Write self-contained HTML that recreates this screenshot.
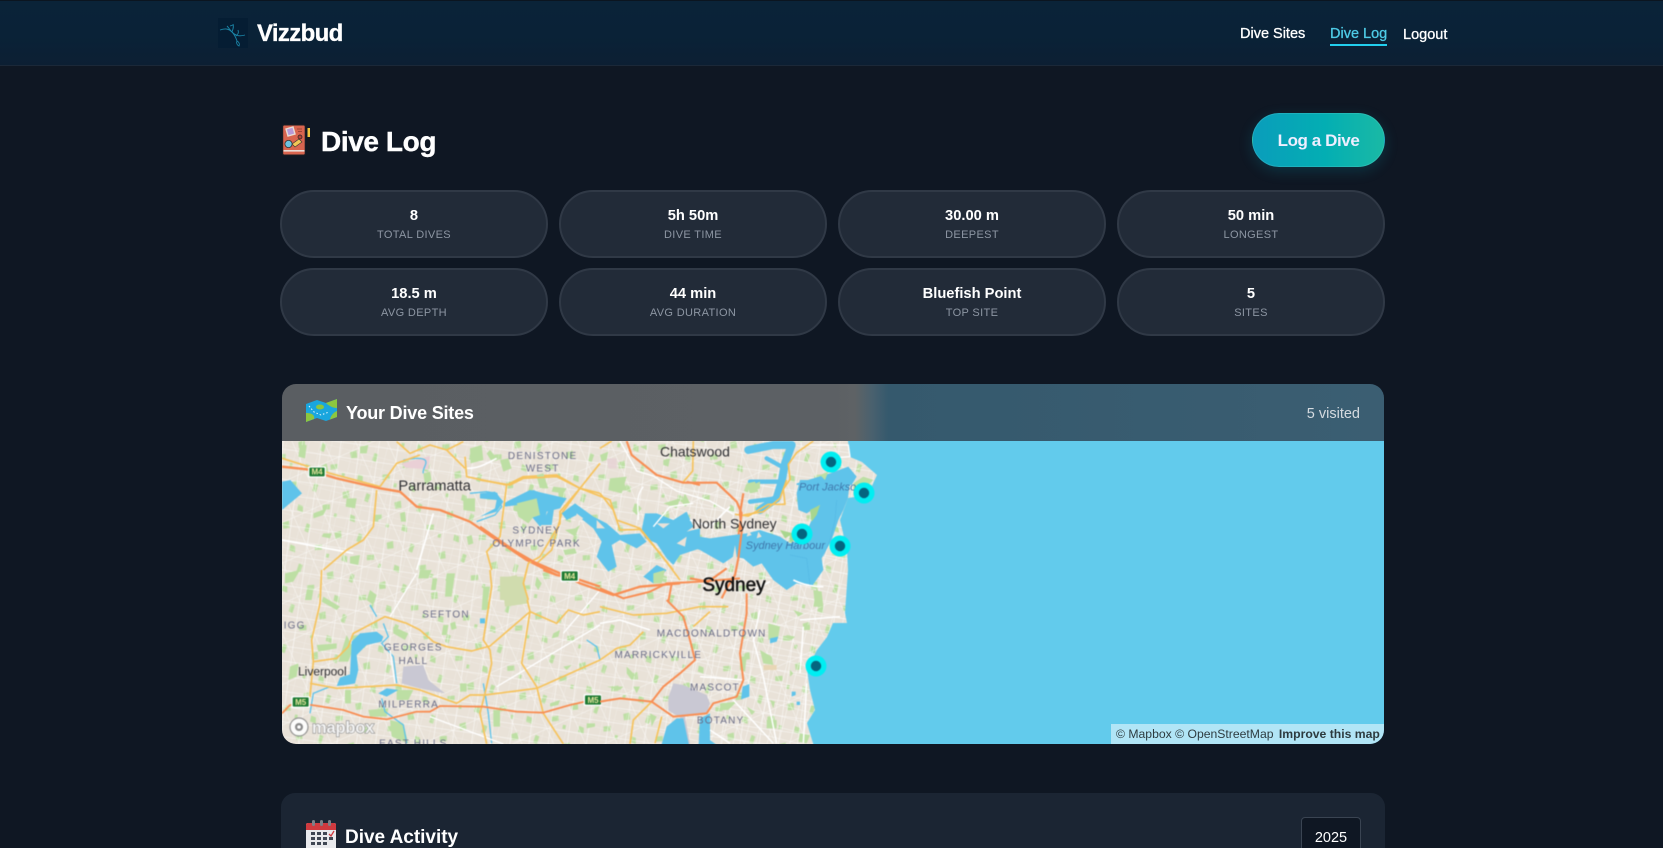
<!DOCTYPE html>
<html lang="en"><head><meta charset="utf-8"><title>Vizzbud - Dive Log</title>
<style>
*{box-sizing:border-box;margin:0;padding:0}
html,body{width:1663px;height:848px;overflow:hidden;background:#0f1723;font-family:"Liberation Sans",Arial,sans-serif;color:#fff}
#w{position:relative;width:1663px;height:848px;overflow:hidden;background:#0f1723}
.abs{position:absolute}
nav{position:absolute;left:0;top:0;width:1663px;height:66px;background:linear-gradient(180deg,#0a2338 0%,#0a2237 55%,#0c1f33 100%);border-top:1px solid #0b1520;border-bottom:1px solid #1b2838}
.brand{position:absolute;left:257px;top:19px;font-size:24px;font-weight:700;letter-spacing:-.66px;line-height:30px;-webkit-text-stroke:.3px #fff}
.nl{position:absolute;font-size:14.5px;line-height:18px;color:#fff;-webkit-text-stroke:.3px currentColor;white-space:nowrap}
h1{position:absolute;left:321px;top:125px;font-size:28px;line-height:34px;font-weight:700;letter-spacing:-.4px;-webkit-text-stroke:.4px #fff}
.btn{position:absolute;left:1252px;top:113px;width:133px;height:54px;border-radius:27px;background:linear-gradient(90deg,#0a9dbb,#03aeb3 55%,#1ab9a5);box-shadow:0 4px 14px rgba(6,182,212,.18);border:1px solid rgba(130,220,220,.2);font-size:17px;font-weight:700;letter-spacing:-.42px;text-align:center;line-height:53px;color:#eef}
.stat{position:absolute;width:268px;height:68px;border-radius:34px;background:#222b38;border:2px solid #303946;text-align:center}
.stat b{position:absolute;left:0;right:0;top:15px;font-size:14.7px;line-height:18px;font-weight:700;white-space:nowrap}
.stat span{position:absolute;left:0;right:0;top:36px;font-size:11px;line-height:14px;letter-spacing:.35px;color:#8d96a3;white-space:nowrap}
.card{position:absolute;left:282px;top:384px;width:1102px;height:360px;border-radius:14px;overflow:hidden}
.hd{position:absolute;z-index:2;left:0;top:0;width:1102px;height:57px;background:linear-gradient(90deg,#5a5e62 0,#5c6064 50%,#5e6265 52%,#4a616e 53.5%,#35596d 55%,#3b5e72 100%)}
.ttl{position:absolute;z-index:3;left:64px;top:18px;font-size:18px;line-height:22px;font-weight:700;letter-spacing:-.2px;white-space:nowrap}
.vis{position:absolute;z-index:3;right:24px;top:20px;font-size:14.5px;line-height:20px;color:#d5dbe0}
.map{position:absolute;left:-4px;top:53px;width:1110px;height:311px;display:block;filter:blur(.45px)}
.attr{position:absolute;z-index:3;right:0;bottom:0;width:273px;height:20px;background:rgba(255,255,255,.5);font-size:12.2px;line-height:21px;padding-left:5px;color:rgba(0,0,0,.75);white-space:nowrap}
.attr b{margin-left:2px}
.card2{position:absolute;left:281px;top:793px;width:1104px;height:55px;border-radius:14px 14px 0 0;background:#1b2533}
.t2{position:absolute;left:345px;top:826px;font-size:19px;line-height:23px;font-weight:700;letter-spacing:-.02px}
.sel{position:absolute;left:1301px;top:817px;width:60px;height:31px;border:1px solid #3a4452;border-bottom:0;border-radius:4px 4px 0 0;background:#0f1723;font-size:14.5px;text-align:center;line-height:40px}
</style></head><body><div id="w">
<nav></nav>
<svg class="abs" style="left:218px;top:18px" width="30" height="30" viewBox="0 0 30 30"><rect width="30" height="30" fill="#051d33"/><g fill="none" stroke="#1b86a8" stroke-width=".9"><path d="M2 12C8 10 11 11 14 14S20 19 27 17"/><path d="M9 8c2 2 3 4 5 6 3 3 4 6 5 9"/><path d="M19 23c-1 2 0 4 2 5 1-2 0-4-2-5M14 14c1-3 2-5 1-8M18 18c2-2 3-3 2-6M12 8l3-1"/></g></svg>
<div class="brand">Vizzbud</div>
<a class="nl" style="left:1240px;top:25px">Dive Sites</a>
<a class="nl" style="left:1330px;top:25px;color:#4ecbe6">Dive Log</a>
<div class="abs" style="left:1330px;top:44px;width:57px;height:2px;background:#22cfee"></div>
<a class="nl" style="left:1403px;top:26px">Logout</a>

<svg class="abs" style="left:282px;top:124px" width="30" height="32" viewBox="0 0 30 32">
<rect x=".7" y="1" width="22.5" height="30" rx="1.5" fill="#d9654f" stroke="#1d1d22" stroke-width="1"/>
<rect x="1.5" y="26" width="21" height="1.6" fill="#e9dcd5"/>
<path d="M4 5l7-2 2 7-7 2z" fill="#b89ad8" stroke="#e9dcd5" stroke-width="1.4"/>
<circle cx="6.5" cy="20" r="3.6" fill="#6cc3e0" stroke="#333" stroke-width=".8"/>
<path d="M10 20l7-5 3 3-7 5z" fill="#f2c555" stroke="#333" stroke-width=".6"/>
<circle cx="18" cy="13" r="2" fill="#b6453a" stroke="#222" stroke-width=".7"/>
<path d="M15 5h5M16 7.5h4" stroke="#8a3b30" stroke-width=".8"/>
<rect x="25.5" y="4" width="2.5" height="9" fill="#f3c63f"/><rect x="25.5" y="13" width="2.5" height="15" fill="#14171d"/>
</svg>
<h1>Dive Log</h1>
<div class="btn">Log a Dive</div>

<div class="stat" style="left:280px;top:190px"><b>8</b><span>TOTAL DIVES</span></div>
<div class="stat" style="left:559px;top:190px"><b>5h 50m</b><span>DIVE TIME</span></div>
<div class="stat" style="left:838px;top:190px"><b>30.00 m</b><span>DEEPEST</span></div>
<div class="stat" style="left:1117px;top:190px"><b>50 min</b><span>LONGEST</span></div>
<div class="stat" style="left:280px;top:268px"><b>18.5 m</b><span>AVG DEPTH</span></div>
<div class="stat" style="left:559px;top:268px"><b>44 min</b><span>AVG DURATION</span></div>
<div class="stat" style="left:838px;top:268px"><b>Bluefish Point</b><span>TOP SITE</span></div>
<div class="stat" style="left:1117px;top:268px"><b>5</b><span>SITES</span></div>

<div class="card">
<div class="hd"></div>
<svg class="abs" style="left:23px;top:14px;z-index:3" width="33" height="26" viewBox="0 0 33 26">
<path d="M1 6L12 2 21 5 32 1V19L21 23 12 20 1 24Z" fill="#1aa6de"/>
<path d="M1 15V24L9 21C10 18 8 15 1 15ZM21 5L32 1V10C28 10 24 8 21 5ZM25 21.500l7-2.500V13c-3 1-6 4-7 8.500z" fill="#8dc63f"/>
<ellipse cx="15" cy="9" rx="4" ry="2.500" fill="#8dc63f"/>
<path d="M4 8l5 6 7 3 8-3" fill="none" stroke="#e6f6ff" stroke-width="1" stroke-dasharray="1.500 2"/>
</svg>
<div class="ttl">Your Dive Sites</div>
<div class="vis">5 visited</div>
<svg class="map" viewBox="278 437 1110 311" xmlns="http://www.w3.org/2000/svg">
<defs>
<pattern id="s1" width="19" height="15" patternUnits="userSpaceOnUse" patternTransform="rotate(8)"><path d="M0 0H19M0 0V15" stroke="#fff" stroke-width="1.1" fill="none"/></pattern>
<pattern id="s2" width="29" height="37" patternUnits="userSpaceOnUse" patternTransform="rotate(-24)"><path d="M0 0H29M0 0V37" stroke="#fff" stroke-width="1" fill="none"/></pattern>
<pattern id="s3" width="11" height="11" patternUnits="userSpaceOnUse" patternTransform="rotate(14)"><path d="M0 0H11M0 0V11" stroke="#fff" stroke-width="1" fill="none"/></pattern>
<pattern id="g1" width="53" height="41" patternUnits="userSpaceOnUse" patternTransform="rotate(11)"><path d="M6 8l6-3 2 7-6 2zM30 4l4 1-1 8-4-1zM42 24l7-2 1 5-7 2zM18 28l5 1 1 6-6-1zM2 30l3 0 0 4-3 0z" fill="#bddfa4"/></pattern>
</defs>
<rect x="270" y="430" width="1130" height="330" fill="#e9e2d8"/>
<rect x="270" y="430" width="620" height="330" fill="url(#g1)"/>
<rect x="270" y="430" width="620" height="330" fill="url(#s1)" opacity=".85"/>
<rect x="270" y="430" width="620" height="330" fill="url(#s2)" opacity=".7"/>
<rect x="270" y="430" width="620" height="330" fill="url(#s3)" opacity=".3"/>
<rect x="660" y="480" width="190" height="280" fill="url(#s3)" opacity=".55"/>

<!-- ocean -->
<path d="M848 441L850 457 862 462 877 475 870 490 855 497 848 498 840 520 847 550 848 570 845 613 847 623 833 623 827 637 817 650 807 670 810 690 815 710 807 723 815 750H1400V430H848Z" fill="#62cbec"/>

<!-- Q1 parramatta -->
<g transform="translate(270 370) scale(.33333)">
<g fill="#bddfa4">
<path d="M600 235l35-10 5 45-38 10zM230 385h30l-5 30-28-5zM580 385h35v40l-35-5zM735 400l55-20 25 30-40 50-30-20zM90 225h20l-5 40-20-5zM150 290l20-10 5 25-20 5zM460 310l20-5 5 25-20 15zM130 430l40-15-10 20-30 10zM310 440h15v15h-15zM390 430l15-5 3 30-15 0zM160 490h25l-5 15-25-5zM800 320l20 0 10 30-20 5zM850 350l40 5-10 15-35-5zM690 270l25-5 10 30-25 10zM590 500l15-5 5 25-15 5zM650 250l10-10 25 30-20 5zM270 230l25-5-5 25-20 0zM240 560l30-5-5 30-25-5z"/>
</g>
<path d="M395 280l40-10 45-12-5 40-70-5z" fill="#ead0d6"/>
<path d="M36 335l25-5 35 40-30 25-30 25z" fill="#5fc3ea"/>
<path d="M790 360l40 15 60 10-20 30-40 10-5 30-15 15-25-30-5-40-75 10-5-10z" fill="#5fc3ea"/>
<g fill="none" stroke="#5fc3ea" stroke-width="4"><path d="M400 270c30-5 55-8 65 0s-10 30-5 40M600 370l50-5 30 5 15 40-20 25-55 20"/></g>
<path d="M36 510L250 550M490 430L440 600M590 295c40 0 60-15 90-30" fill="none" stroke="#fff" stroke-width="5"/>
<g fill="none" stroke="#f6c35d" stroke-width="5" stroke-linejoin="round">
<path d="M36 265L180 310 330 350M320 360l-10 110-30 40-50 30-70 60M380 215l40 35 60-25 50 15 50-25M585 260l5 60 120 25 50-25 100-5 70 40 60 15M710 345L690 500 650 545 665 600M990 280L930 355 875 430 845 540 800 580M530 240L585 295M330 350L380 280 450 255"/>
</g>
<path d="M36 290L110 298 200 325 330 355 390 365 440 410 510 420 600 455 680 510 770 570 860 615" fill="none" stroke="#f88f55" stroke-width="7" stroke-linejoin="round"/>
<rect x="114" y="289" width="54" height="34" rx="5" fill="#fff"/><rect x="118" y="293" width="46" height="26" rx="3" fill="#1d7a32"/>
<text x="141" y="314" font-size="24" font-weight="700" fill="#e8e6a0" text-anchor="middle">M4</text>
<text x="494" y="362" font-size="44" fill="#2f2f33" text-anchor="middle">Parramatta</text>
<g font-size="30" fill="#6a6d88" text-anchor="middle" letter-spacing="3.8">
<text x="818" y="267">DENISTONE</text><text x="818" y="305">WEST</text>
</g>
</g>

<!-- Q3 southwest -->
<g transform="translate(270 570) scale(.33333)">
<g fill="#bddfa4">
<path d="M45 10l45-10-20 35-25 5zM530 10h25l-10 70h-20zM450 0h35l-10 25-30 0zM488 25h14l-5 35h-14zM110 60l20 0-5 30-20 0zM300 60l20 15-10 30-20-15zM160 80l50 30-10 10-45-25zM370 170l45 20-10 20-35-20zM640 50l20 0-10 70-15 0zM230 195l20 40-15 40-30 0zM140 225l60-5 0 15-55 10zM520 165l15 0-5 30-15 0zM225 360h18v40h-18zM380 360h50l-15 30-35 0zM570 340l20 0 0 25-20 0zM295 420l60-5-5 25-50 0zM360 450l40 10 15 60-50-20zM60 290l25-10-5 40-25 10zM670 420l20 0 0 50-20 0zM800 20l15 20-10 20-10-15zM850 190l20-10-5 20-20 5zM880 290l25-5-15 15zM950 460l25 0 0 10-25 5zM840 400l30-10-5 15-25 5zM540 160l15-5 5 20-15 5z"/>
</g>
<path d="M695 25l45-10 20 60 15 25-70 10z" fill="#d0dcae"/>
<path d="M400 290l60-5 15 45 50 40-75-15-55-15z" fill="#c9c8d3"/>
<path d="M245 215l25-25 50-5 20 15-5 15-45 10-30 30 5 45-10 40-25 5-30 3 10-25 30-10zM325 370l25-15 35 5-35 20z" fill="#5fc3ea"/>
<path d="M630 145h15v15h-15z" fill="#5fc3ea"/>
<g fill="none" stroke="#5fc3ea" stroke-width="4"><path d="M340 160l15 40-20 20 35 40 10 80M335 385l10 40 55 40 10 55M120 430l10-60 50-20M640 340l15 90 10 90M950 210l30 20 10 40M300 105l20 35"/></g>
<g fill="none" stroke="#fff" stroke-width="4"><path d="M360 140L440 10M680 350L990 165M990 60L880 190M360 240l15 100M480 440L700 522"/></g>
<g fill="none" stroke="#f6c35d" stroke-width="5" stroke-linejoin="round">
<path d="M155 0L150 100 125 210 130 275 120 380 110 400M130 275L200 265 235 230 250 190 345 140 410 160 450 180 490 215 530 230 605 243 660 228 780 125 860 160 895 120 940 135 990 125M660 0L665 50 640 210 660 240 665 280 645 370 630 430 650 522M770 0L760 40 780 125 755 280 800 350 820 430 880 522M120 340L200 355 380 345 450 360 560 400 600 375 645 375 800 355 990 270"/>
</g>
<path d="M36 430L60 405 125 405 220 420 280 440 350 448 440 425 480 425 510 408 640 410 740 425 820 428 900 405 945 395 990 380" fill="none" stroke="#f88f55" stroke-width="5.500" stroke-linejoin="round"/>
<path d="M820 0L860 15 930 30 990 50" fill="none" stroke="#f88f55" stroke-width="7"/>
<g>
<rect x="64" y="378" width="56" height="36" rx="5" fill="#fff"/><rect x="68" y="382" width="48" height="28" rx="3" fill="#1d7a32"/>
<text x="92" y="405" font-size="24" font-weight="700" fill="#e8e6a0" text-anchor="middle">M5</text>
<rect x="941" y="372" width="54" height="36" rx="5" fill="#fff"/><rect x="945" y="376" width="48" height="28" rx="3" fill="#1d7a32"/>
<text x="969" y="399" font-size="24" font-weight="700" fill="#e8e6a0" text-anchor="middle">M5</text>
</g>
<text x="157" y="316" font-size="36" fill="#2f2f33" text-anchor="middle">Liverpool</text>
<g font-size="30" fill="#6a6d88" text-anchor="middle" letter-spacing="3.6">
<text x="528" y="142">SEFTON</text><text x="430" y="242">GEORGES</text><text x="430" y="282">HALL</text>
<text x="74" y="175">IGG</text><text x="416" y="413">MILPERRA</text><text x="430" y="530">EAST HILLS</text>
</g>
</g>

<!-- Z12 parramatta river -->
<g transform="translate(480 470) scale(.33333)" fill="#5fc3ea">
<path d="M245 130l40-30 55 40 40 20 40 35 60-5 20 25-30 20-50-25-25 15 15 65-25 15-35-45 15-45-25-40-50-40-30 15zM495 130l35 0 50 20 40-25 20 45-20 15 40-10 0 60-60 20-20 30-20-20-30-45-35-15-10-25zM490 320l40-35 30 15-40 40zM80 95l70-35 110 25-50 25-25 55 30 0 10-70-25-15"/>
<path d="M0 70l45-5 25 30-20 30-50 15 45-25 5-25-50-5z"/>
</g>
<g transform="translate(480 470) scale(.33333)" fill="#e9e2d8"><path d="M290 130l20 15-25 15zM350 150l25 25-25 0zM530 160l40 0-20 15zM590 220l30-20-5 30z"/></g>
<g transform="translate(480 470) scale(.33333)" fill="#bddfa4"><path d="M110 100l60-15 10 50-45 15zM170 15l20-5 15 45-20 0zM255 180l30-5 15-10-15 35zM390 25l50-5-15 50-40-10zM520 310l35-10-10 40-25 0zM250 240l35-5 5 15-35 5zM470 100l15 15-15 20-10-10zM550 100l50-15-10 30z"/><path d="M60 320l70 0 15 70H60z" fill="#d0dcae"/></g>
<g transform="translate(480 470) scale(.33333)" fill="none" stroke="#f6c35d" stroke-width="5"><path d="M0 30L90 45 130 25 230 20 300 55 390 90 410 150 480 175 540 250 600 330M300 55L240 125 240 160 180 260 145 280 130 340 145 390"/></g>
<path transform="translate(480 470) scale(.33333)" d="M620 35l40 10" fill="none" stroke="#f88f55" stroke-width="6"/>

<!-- Q2 north -->
<g transform="translate(600 370) scale(.33333)">
<g fill="none" stroke="#5fc3ea" stroke-linejoin="round" stroke-linecap="round">
<path d="M445 240L520 225 575 225 555 280 545 335 530 385 480 420" stroke-width="24"/>
<path d="M545 290L500 265M540 335L450 335M530 385L450 395" stroke-width="13"/>
</g>
<path d="M590 340L640 325 690 310 730 295 745 290 770 320 755 345 590 345Z" fill="#5fc3ea"/>
<g fill="#bddfa4"><path d="M0 255l25-10-5 25-15 5zM120 230l20-5 0 15zM190 270l20-5-5 25-15-5zM455 345l25-10 0 20-25 10zM340 280l25-10 0 20zM30 340l40-10 10 30-40 5zM255 370l15 30-15 10-10-15zM660 315l25-10-10 25zM760 340l30-20 30 10-30 30-30 5zM720 350l20 5-10 25z"/></g>
<path d="M20 265h30v30H25z" fill="#e6d2d4" opacity=".8"/>
<g fill="none" stroke="#fff" stroke-width="4"><path d="M60 213l50 90 50 15 70 45 100 30 70 40M130 350c-25 30-15 60-15 100M620 225h125l5 35-70 5M160 470l50-60 70-10"/></g>
<g fill="none" stroke="#f6c35d" stroke-width="5" stroke-linejoin="round">
<path d="M0 235L35 213M0 370L40 420 60 480 120 478 220 600M280 213l-2 90-30 35M640 213l-50 35-25 35 5 45-20 30 5 45-50 0-60 35-40-5"/>
</g>
<path d="M80 213L95 255 170 315 250 338 350 338 410 395 425 430 415 500" fill="none" stroke="#f88f55" stroke-width="6.500" stroke-linejoin="round"/>
</g>

<!-- Z11 harbour -->
<g transform="translate(690 480) scale(.33333)">
<path d="M0 165L60 175 130 165 170 160 210 150 270 170 300 190 340 175 365 120 390 75 350 100 325 90 320 40 330 0H480L474 54 460 90 445 120 425 180 395 235 400 270 365 320 320 310 290 330 250 300 215 250 190 260 160 235 130 230 100 250 30 210 0 200Z" fill="#5fc3ea"/>
<path d="M135 195l8 55-8 30-8-40zM175 150l-5 20 15-5zM205 155l-5 20 15-5z" fill="#e9e2d8"/>
<path d="M390 75l-30 15 5 35 15-20zM270 150l40 10-25 15zM300 160l20-5 0 25-20 5z" fill="#a8d68e"/>
<path d="M445 165l-20 60 40 10 8-50z" fill="#bddfa4" opacity=".7"/>
<path d="M380 320l20 60h-30zM170 10l25-5 10 30-25 5z" fill="#bddfa4"/>
<path d="M160 40l-10 60 5 55-10 80-10 50-25 40-15 30M0 295l55 10 55-40" fill="none" stroke="#f88f55" stroke-width="6.500" stroke-linejoin="round"/>
<path d="M160 105l60-10 50-40 20-55" fill="none" stroke="#f6c35d" stroke-width="5"/>
<path d="M310 300c20 10 50 20 90 20M180 335l60-30M0 120l60 20 60-60" fill="none" stroke="#fff" stroke-width="5"/>
<path d="M440 60l-5 60-15 60-20 50M300 225l50 10 10 80" fill="none" stroke="#4aaede" stroke-width="1"/>
</g>

<!-- Q4 south -->
<g transform="translate(600 570) scale(.33333)">
<g fill="#bddfa4">
<path d="M640 60l25 5 5 45-25 0zM505 160l35 10-5 30-30 10zM480 240l35 20 5 25-30-5zM410 160l20-5 0 15zM580 120l30 10-15 10zM500 450l30 0 0 25-30 0zM600 490l30 5-10 25-25-5zM360 400l50-5-25 25-25 0zM420 260l20 0-5 45-15-5zM440 410l25 15-10 10zM610 165h20v15h-20zM560 195l25 5-10 10-15-5zM80 290l25 25-10 15-15-20zM20 350l50 0-10 10zM510 390l15 5-5 20zM570 300l10 10-10 10zM100 350l20 0-10 20zM150 430l20 10-15 30z"/>
</g>
<path d="M490 285h40v15h-40z" fill="#e8d6b5"/>
<path d="M220 340l30 5 70 30 10 25-10 30-65 10 15 82h-15l-15-80-35-20 0-40z" fill="#c9c8d3"/>
<path d="M180 540l20-70 30-25 20 0 20 95zM300 445l30-15 0 110-35 0zM330 510l40 30h-40zM428 350l20-8 0 38-25 8zM575 365l12 0 0 10-12 5zM590 395l10 0 0 10-10 0zM510 205l25-5-5 15-20 5z" fill="#5fc3ea"/>
<g fill="none" stroke="#fff" stroke-width="4.500"><path d="M0 160l60-10 90 30M490 320l40 200M400 390l120 130M330 480l60 40M600 150l120-10M480 120l-20 90 30 110M610 170l-10 140M620 340l-10 180M300 320l130 10"/></g>
<g fill="none" stroke="#f6c35d" stroke-width="5" stroke-linejoin="round">
<path d="M0 110l100 25 100-5 100-20 85 0M0 270L50 235 90 225 130 185M90 522l10-72 60-60M280 170l50-45M185 440l-20 80"/>
</g>
<path d="M0 55L70 85 150 65 200 40 300 35 420 25M200 90L250 140 270 210 285 270 240 310 190 350 155 395M440 70L440 130 420 250 430 330 410 380 340 400 320 430 220 440 155 395 60 385 0 395M215 40L205 95M240 310l40-35" fill="none" stroke="#f88f55" stroke-width="6" stroke-linejoin="round"/>
<g font-size="30" fill="#6a6d88" text-anchor="middle" letter-spacing="3.6">
<text x="335" y="200">MACDONALDTOWN</text><text x="175" y="264">MARRICKVILLE</text><text x="345" y="362">MASCOT</text><text x="362" y="461">BOTANY</text>
</g>
</g>
<!-- top labels -->
<g transform="translate(600 370) scale(.33333)" text-anchor="middle" fill="#2f2f33">
<text x="285" y="259" font-size="42">Chatswood</text>
<text x="403" y="476" font-size="42">North Sydney</text>
<text x="692" y="362" font-size="33" font-style="italic" fill="#3f78ac">Port Jackson</text>
<text x="556" y="537" font-size="33" font-style="italic" fill="#3f78ac">Sydney Harbour</text>
</g>
<text x="734" y="591" font-size="19" fill="#111" stroke="#111" stroke-width=".5" text-anchor="middle">Sydney</text>
<g transform="translate(480 470) scale(.33333)" fill="none" stroke="#f88f55" stroke-width="7"><path d="M0 170L100 240 160 275 240 310 300 340 400 375 480 350 600 340"/></g>
<g transform="translate(480 470) scale(.33333)" font-size="30" fill="#6a6d88" text-anchor="middle" letter-spacing="3.8"><text x="170" y="190">SYDNEY</text><text x="170" y="230">OLYMPIC PARK</text></g>
<g transform="translate(480 470) scale(.33333)"><rect x="241" y="300" width="56" height="36" rx="5" fill="#fff"/><rect x="245" y="304" width="48" height="28" rx="3" fill="#1d7a32"/><text x="269" y="327" font-size="24" font-weight="700" fill="#e8e6a0" text-anchor="middle">M4</text></g>

<!-- markers -->
<g fill="#00eef2"><circle cx="831" cy="462" r="10.500"/><circle cx="864" cy="493" r="10.500"/><circle cx="802" cy="534" r="10.500"/><circle cx="840" cy="546" r="10.500"/><circle cx="816" cy="666" r="10.500"/></g>
<g fill="#05657f"><circle cx="831" cy="462" r="5.200"/><circle cx="864" cy="493" r="5.200"/><circle cx="802" cy="534" r="5.200"/><circle cx="840" cy="546" r="5.200"/><circle cx="816" cy="666" r="5.200"/></g>

<!-- mapbox logo -->
<circle cx="299" cy="727" r="9" fill="#fff" stroke="#8a8a8a" stroke-width="1.200" opacity=".9"/>
<circle cx="299" cy="727" r="4" fill="#8a8a8a"/><circle cx="299" cy="727" r="1.800" fill="#fff"/>
<text x="312" y="733" font-size="16.500" font-weight="700" fill="#f4f4f4" stroke="#8f8f8f" stroke-width="1.200" paint-order="stroke" letter-spacing="-.2">mapbox</text>
</svg>
<div class="attr">© Mapbox © OpenStreetMap <b>Improve this map</b></div>
</div>

<div class="card2"></div>
<svg class="abs" style="left:306px;top:820px" width="30" height="28" viewBox="0 0 30 28">
<rect x="0" y="3" width="30" height="30" rx="2" fill="#e8e9ec"/>
<path d="M0 10V5a2 2 0 0 1 2-2h26a2 2 0 0 1 2 2v5z" fill="#cf3a3f"/>
<g fill="#7c8088"><rect x="6" y="0" width="3" height="6" rx="1.500"/><rect x="14" y="0" width="3" height="6" rx="1.500"/><rect x="22" y="0" width="3" height="6" rx="1.500"/></g>
<g fill="#3f4653"><rect x="5" y="12" width="4" height="3"/><rect x="11" y="12" width="4" height="3"/><rect x="17" y="12" width="4" height="3"/><rect x="5" y="17" width="4" height="3"/><rect x="11" y="17" width="4" height="3"/><rect x="17" y="17" width="4" height="3"/><rect x="23" y="17" width="4" height="3"/><rect x="5" y="22" width="4" height="3"/><rect x="11" y="22" width="4" height="3"/><rect x="17" y="22" width="4" height="3"/></g>
<path d="M23 14l2 2 3-5" stroke="#cf3a3f" stroke-width="1.300" fill="none"/>
</svg>
<div class="t2">Dive Activity</div>
<div class="sel">2025</div>
</div></body></html>
